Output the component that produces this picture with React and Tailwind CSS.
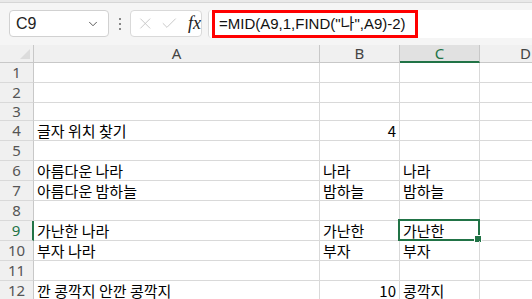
import { ChevronDown, X, Check } from 'lucide-react'

const rows = [
  { n: 1, h: 'h-[19px]' },
  { n: 2, h: 'h-[19px]' },
  { n: 3, h: 'h-[17px]' },
  { n: 4, h: 'h-[19px]', a: '글자 위치 찾기', b: '4', bRight: true },
  { n: 5, h: 'h-[19px]' },
  { n: 6, h: 'h-[19px]', a: '아름다운 나라', b: '나라', c: '나라' },
  { n: 7, h: 'h-[19px]', a: '아름다운 밤하늘', b: '밤하늘', c: '밤하늘' },
  { n: 8, h: 'h-[19px]' },
  { n: 9, h: 'h-[19px]', a: '가난한 나라', b: '가난한', c: '가난한', sel: true },
  { n: 10, h: 'h-[19px]', a: '부자 나라', b: '부자', c: '부자' },
  { n: 11, h: 'h-[19px]' },
  { n: 12, h: 'h-[19px]', a: '깐 콩깍지 안깐 콩깍지', b: '10', bRight: true, c: '콩깍지' },
]

const cellFont = "font-['Noto_Sans_CJK_KR',sans-serif] text-[15px] leading-none text-black"

export default function App() {
  return (
    <div className="w-[532px] h-[299px] overflow-hidden bg-[#f5f5f5] font-['Liberation_Sans','Noto_Sans_CJK_KR',sans-serif]">
      {/* Toolbar */}
      <div className="h-[3px] bg-[#e9e9e9] border-b border-[#d6d6d6]" />
      <div className="h-[42px] flex items-start pt-[7px] pl-[9px]">
        <div className="w-[100px] h-[27px] bg-white border border-[#d1d1d1] rounded-[4px] flex items-center justify-between pl-[6px] pr-[8px]">
          <span className="text-[16px] text-[#222]">C9</span>
          <ChevronDown size={14} strokeWidth={1.5} className="text-[#444]" />
        </div>
        <div className="w-[21px] h-[27px] flex flex-col items-center justify-center gap-[3px]">
          <span className="w-[2px] h-[2px] bg-[#888]" />
          <span className="w-[2px] h-[2px] bg-[#888]" />
          <span className="w-[2px] h-[2px] bg-[#888]" />
        </div>
        <div className="w-[72px] h-[27px] bg-white border border-[#d9d9d9] rounded-[4px] flex items-center pl-[5px] gap-[5px]">
          <X size={19} strokeWidth={1.2} className="text-[#c4c4c4]" />
          <Check size={19} strokeWidth={1.2} className="text-[#c4c4c4]" />
          <span className="ml-[5px] font-['Liberation_Serif',serif] italic text-[18px] text-[#222]">fx</span>
        </div>
        <div className="flex-1 ml-[6px] h-[28px] bg-white border-l border-[#d9d9d9] rounded-l-[4px] flex items-center pl-[3px]">
          <div className="h-[28px] w-[206px] border-[3px] border-[#ff0000] flex items-center pl-[4px]">
            <span className="text-[15px] text-[#111] whitespace-nowrap">=MID(A9,1,FIND("<span className="font-['Noto_Sans_CJK_KR',sans-serif]">나</span>",A9)-2)</span>
          </div>
        </div>
      </div>

      {/* Grid */}
      <div className="grid grid-cols-[34px_286px_80px_80px_1fr] bg-white">
        {/* header row */}
        <div className="h-[18px] bg-[#f0f0f0] border-r border-b border-[#c8c8c8] relative">
          <div className="absolute right-[3px] bottom-[3px] w-0 h-0 border-l-[10px] border-l-transparent border-b-[10px] border-b-[#dcdcdc]" />
        </div>
        <div className="h-[18px] bg-[#f0f0f0] border-r border-b border-[#c8c8c8] flex items-center justify-center text-[15px] text-[#444] font-['Noto_Sans',sans-serif]">A</div>
        <div className="h-[18px] bg-[#f0f0f0] border-r border-b border-[#c8c8c8] flex items-center justify-center text-[15px] text-[#444] font-['Noto_Sans',sans-serif]">B</div>
        <div className="h-[18px] bg-[#e1e1e1] border-r border-[#c8c8c8] border-b-2 border-b-[#217346] flex items-center justify-center text-[15px] text-[#217346] font-['Noto_Sans',sans-serif]">C</div>
        <div className="h-[18px] bg-[#f0f0f0] border-b border-[#c8c8c8] flex items-center justify-start pl-[40px] text-[15px] text-[#444] font-['Noto_Sans',sans-serif]">D</div>

        {rows.map(r => (
          <Row key={r.n} r={r} />
        ))}
      </div>
    </div>
  )
}

function Row({ r }) {
  const line = 'border-r border-b border-[#d9d9d9]'
  return (
    <>
      <div
        className={`${r.h} box-content bg-[#f0f0f0] border-b border-[#d9d9d9] flex items-center justify-center text-[15px] font-['Noto_Sans',sans-serif] ${
          r.sel ? 'bg-[#e1e1e1] text-[#217346] border-r-2 border-r-[#217346]' : 'text-[#555] border-r border-r-[#c8c8c8]'
        }`}
      >
        {r.n}
      </div>
      <div className={`${r.h} box-content ${line} ${cellFont} flex items-center pl-[3px] whitespace-nowrap`}>{r.a}</div>
      <div className={`${r.h} box-content ${line} ${cellFont} flex items-center whitespace-nowrap ${r.bRight ? 'justify-end pr-[3px]' : 'pl-[3px]'}`}>{r.b}</div>
      <div className={`${r.h} box-content ${line} ${cellFont} flex items-center pl-[3px] whitespace-nowrap relative`}>
        {r.c}
        {r.sel && (
          <>
            <div className="absolute left-[-2px] top-[-2px] right-[-1px] bottom-[-1px] border-2 border-[#217346]" />
            <div className="absolute right-[-3px] bottom-[-3px] w-[6px] h-[6px] bg-[#217346] border border-white box-content" />
          </>
        )}
      </div>
      <div className={`${r.h} box-content border-b border-[#d9d9d9]`} />
    </>
  )
}
